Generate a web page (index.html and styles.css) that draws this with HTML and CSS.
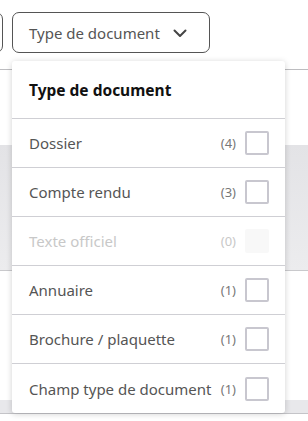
FILE: index.html
```html
<!DOCTYPE html>
<html lang="fr">

<head>
    <meta charset="UTF-8">
    <meta name="viewport" content="width=device-width, initial-scale=1.0">
    <title>Filtres</title>
    <link rel="stylesheet" href="styles.css">
</head>

<body>
    <div class="toolbar">
        <button class="filter-btn filter-btn--cut" aria-label="Date"></button>
        <button class="filter-btn">Type de document
            <svg class="chevron" width="16" height="16" viewBox="0 0 16 16">
                <path d="M2.5 5.5 L8 11 L13.5 5.5" fill="none" stroke="#444" stroke-width="2" stroke-linecap="round" stroke-linejoin="round"/>
            </svg>
        </button>
    </div>

    <!-- results behind the dropdown -->
    <div class="results">
        <div class="result result--blank"></div>
        <div class="result result--grey"></div>
        <div class="result result--blank2"></div>
        <div class="result result--grey2"></div>
    </div>

    <!-- dropdown -->
    <div class="dropdown">
        <div class="dropdown-title">Type de document</div>
        <label class="option">
            <span class="option-label">Dossier</span>
            <span class="option-count">(4)</span>
            <span class="box"></span>
        </label>
        <label class="option">
            <span class="option-label">Compte rendu</span>
            <span class="option-count">(3)</span>
            <span class="box"></span>
        </label>
        <label class="option option--disabled">
            <span class="option-label">Texte officiel</span>
            <span class="option-count">(0)</span>
            <span class="box"></span>
        </label>
        <label class="option">
            <span class="option-label">Annuaire</span>
            <span class="option-count">(1)</span>
            <span class="box"></span>
        </label>
        <label class="option">
            <span class="option-label">Brochure / plaquette</span>
            <span class="option-count">(1)</span>
            <span class="box"></span>
        </label>
        <label class="option">
            <span class="option-label">Champ type de document</span>
            <span class="option-count">(1)</span>
            <span class="box"></span>
        </label>
    </div>
</body>

</html>
```

FILE: styles.css
```css
body {
    font-family: "Noto Sans", "Open Sans", sans-serif;
    margin: 0;
    padding: 0;
    background-color: #fff;
    position: relative;
    overflow: hidden;
    height: 421px;
}

.toolbar {
    display: flex;
    gap: 9px;
    padding-top: 12px;
    height: 41px;
    margin-left: -60px;
}

.filter-btn {
    display: flex;
    align-items: center;
    gap: 12px;
    height: 41px;
    padding: 0 21px 0 16px;
    background: #fff;
    border: 1px solid #555;
    border-radius: 7px;
    font-family: inherit;
    font-size: 15px;
    color: #555;
}

.filter-btn--cut {
    width: 63px;
}

.chevron {
    margin-top: 1px;
}

.results {
    margin-top: 16px;
    border-top: 1px solid #bdbdc0;
}

.result--blank {
    height: 75px;
}

.result--grey {
    height: 125px;
    background: linear-gradient(#e3e3e6, #ececee);
    border-bottom: 1px solid #c9c9cc;
}

.result--blank2 {
    height: 129px;
}

.result--grey2 {
    height: 13px;
    background: #e8e8eb;
    border-bottom: 1px solid #c4c4c8;
}

.dropdown {
    position: absolute;
    top: 61px;
    left: 12px;
    width: 273px;
    background: #fff;
    border-radius: 3px;
    box-shadow: 0 1px 6px rgba(0, 0, 0, 0.18);
}

.dropdown-title {
    height: 57px;
    padding-left: 17px;
    display: flex;
    align-items: center;
    font-weight: 700;
    font-size: 15.5px;
    color: #111;
    border-bottom: 1px solid #cfcfd4;
}

.option {
    display: flex;
    align-items: center;
    height: 48px;
    padding: 0 16px 0 17px;
    border-bottom: 1px solid #cfcfd4;
    font-size: 15px;
    color: #555;
}

.option:last-child {
    border-bottom: none;
    height: 49px;
}

.option-label {
    flex: 1;
}

.option-count {
    font-size: 13px;
    color: #777;
    margin-right: 9px;
}

.box {
    width: 20px;
    height: 20px;
    border: 2px solid #c8c7cf;
    border-radius: 2px;
}

.option--disabled .option-label,
.option--disabled .option-count {
    color: #c8c8c8;
}

.option--disabled .box {
    border-color: #f8f8f8;
    background: #f8f8f8;
}
```
